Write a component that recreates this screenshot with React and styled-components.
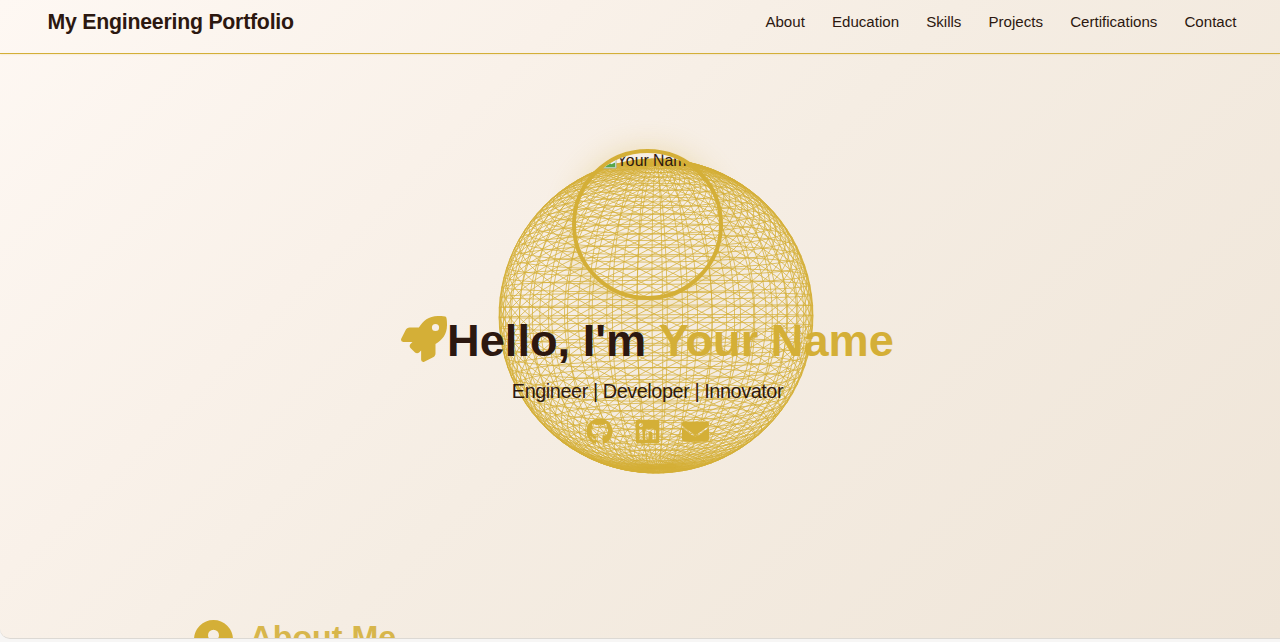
import React from "react";
import styled, { createGlobalStyle } from "styled-components";
import { FaRocket, FaGithub, FaLinkedin, FaEnvelope } from "react-icons/fa";
import { FaCircleUser } from "react-icons/fa6";

const GOLD = "#d4af37";
const INK = "#2c1810";

const GlobalStyle = createGlobalStyle`
  * { box-sizing: border-box; }
  body {
    margin: 0;
    background: #f7f6f5;
    color: ${INK};
    font-family: "Liberation Sans", Arial, sans-serif;
    overflow: hidden;
  }
`;

const Page = styled.div`
  height: 639px;
  overflow: hidden;
  border-bottom: 1px solid #dcd9d4;
  border-bottom-left-radius: 10px;
  background: linear-gradient(135deg, #fef8f3 0%, #f9f1e9 30%, #f5ede3 50%, #efe5d8 100%);
`;

const Header = styled.header`
  display: flex;
  justify-content: space-between;
  align-items: center;
  height: 54px;
  padding: 0 43.5px 9px 47.5px;
  border-bottom: 1px solid ${GOLD};
  box-shadow: 0 0 2px rgba(212, 175, 55, 0.35);
`;

const Brand = styled.div`
  font-size: 21.3px;
  font-weight: 700;
  line-height: 24px;
  letter-spacing: -0.24px;
`;

const Nav = styled.nav`
  display: flex;
  gap: 27.1px;
  font-size: 15.1px;
  line-height: 20px;
`;

const NavLink = styled.a`
  color: ${INK};
`;

const Hero = styled.section`
  position: relative;
  display: flex;
  flex-direction: column;
  align-items: center;
  height: 565px;
  padding: 95px 0 0 15px;
`;

const Globe = styled.svg`
  position: absolute;
  left: 490.5px;
  top: 97px;
  width: 330px;
  height: 330px;
  fill: none;
  stroke: ${GOLD};
  stroke-width: 0.75;
`;

const Avatar = styled.div`
  position: relative;
  display: flex;
  justify-content: center;
  width: 151px;
  height: 151px;
  border: 4px solid ${GOLD};
  border-radius: 50%;
  overflow: hidden;
  box-shadow: 0 0 28px rgba(212, 175, 55, 0.3);
  padding-left: 2px;
  font-size: 15.8px;
  line-height: 16px;
  white-space: nowrap;
`;

const BrokenImage = styled.svg`
  flex: none;
  width: 15px;
  height: 15px;
  margin-top: 1px;
`;

const Title = styled.h1`
  position: relative;
  display: flex;
  align-items: center;
  margin: 14px 0 0;
  font-size: 45.2px;
  line-height: 54px;
  white-space: pre;
`;

const Accent = styled.span`
  color: ${GOLD};
`;

const Rocket = styled(FaRocket)`
  width: 46px;
  height: 46px;
  margin-bottom: 4px;
  color: ${GOLD};
`;

const Subtitle = styled.p`
  position: relative;
  margin: 11px 0 0;
  font-size: 19.8px;
  line-height: 24px;
  letter-spacing: -0.4px;
`;

const Socials = styled.div`
  position: relative;
  display: flex;
  justify-content: center;
  gap: 21px;
  margin-top: 15px;
  color: ${GOLD};
  font-size: 27px;
`;

const Section = styled.section`
  padding-left: 194px;
`;

const SectionTitle = styled.h2`
  display: flex;
  align-items: flex-start;
  gap: 16.5px;
  margin: 0;
  color: ${GOLD};
  font-size: 32.2px;
  line-height: 37px;
`;

const SectionIcon = styled(FaCircleUser)`
  width: 39px;
  height: 39px;
  margin-top: 1px;
`;

const SectionLabel = styled.span`
  opacity: 0.88;
`;

function buildSphere() {
  const rows = 50;
  const columns = 50;
  const distance = 4;
  const scale = 157 * Math.sqrt(distance * distance - 1);
  const tiltX = 0.01;
  const tiltY = 0.03;
  const tiltZ = 0.006;
  const project = (row, column) => {
    const theta = (row / rows) * Math.PI;
    const phi = (column / columns) * Math.PI * 2 + tiltY;
    let x = Math.sin(theta) * Math.cos(phi);
    let y = Math.cos(theta);
    let z = Math.sin(theta) * Math.sin(phi);
    [y, z] = [y * Math.cos(tiltX) - z * Math.sin(tiltX), y * Math.sin(tiltX) + z * Math.cos(tiltX)];
    [x, y] = [x * Math.cos(tiltZ) - y * Math.sin(tiltZ), x * Math.sin(tiltZ) + y * Math.cos(tiltZ)];
    const k = scale / (distance - z);
    return `${(165 + x * k).toFixed(1)} ${(165 - y * k).toFixed(1)}`;
  };
  let d = "";
  for (let i = 0; i < rows; i += 1) {
    for (let j = 0; j < columns; j += 1) {
      d += `M${project(i, j)}L${project(i + 1, j)}L${project(i, j + 1)}L${project(i, j)}`;
    }
  }
  return d;
}

const SPHERE = buildSphere();
const LINKS = ["About", "Education", "Skills", "Projects", "Certifications", "Contact"];

export default function App() {
  return (
    <Page>
      <GlobalStyle />
      <Header>
        <Brand>My Engineering Portfolio</Brand>
        <Nav>{LINKS.map((link) => <NavLink key={link}>{link}</NavLink>)}</Nav>
      </Header>
      <Hero>
        <Globe viewBox="0 0 330 330"><path d={SPHERE} /></Globe>
        <Avatar>
          <BrokenImage viewBox="0 0 16 16">
            <path d="M1 1h10l4 4v10H1z" fill="#e8f1fb" stroke="#a9b6a0" />
            <path d="M2 14l5-6 3 3 4-2v5z" fill="#57a64a" />
          </BrokenImage>
          Your Name
        </Avatar>
        <Title><Rocket />Hello, I'm <Accent>Your Name</Accent></Title>
        <Subtitle>Engineer | Developer | Innovator</Subtitle>
        <Socials><FaGithub /><FaLinkedin /><FaEnvelope /></Socials>
      </Hero>
      <Section>
        <SectionTitle><SectionIcon /><SectionLabel>About Me</SectionLabel></SectionTitle>
      </Section>
    </Page>
  );
}
